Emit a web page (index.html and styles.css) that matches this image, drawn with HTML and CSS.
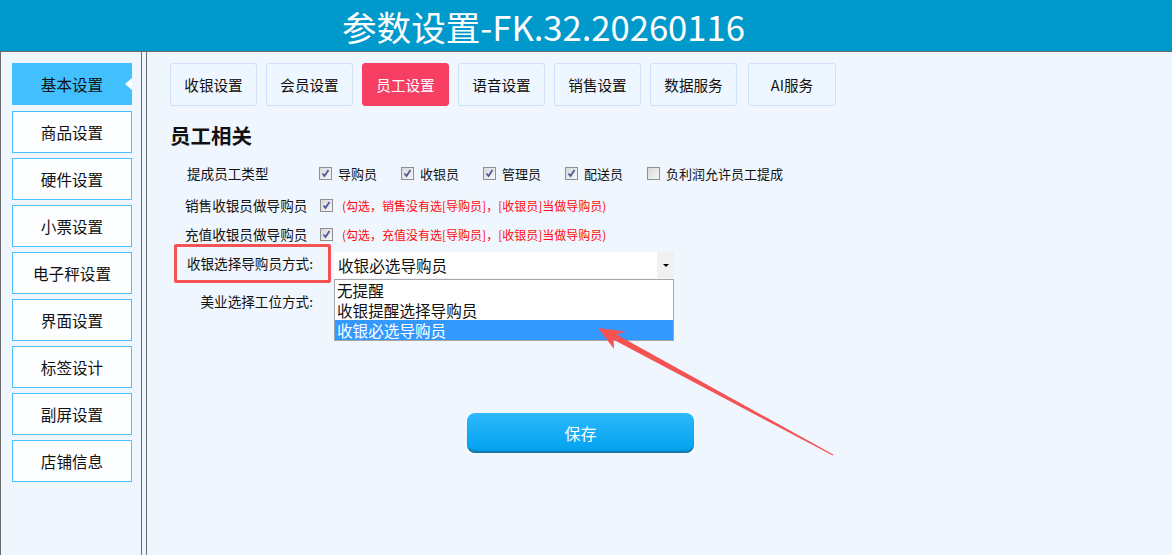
FILE: index.html
```html
<!DOCTYPE html>
<html lang="zh-CN">
<head>
<meta charset="UTF-8">
<meta name="viewport" content="width=device-width, initial-scale=1.0">
<title>参数设置</title>
<link rel="stylesheet" href="styles.css">
</head>
<body>

<div class="header">参数设置-FK.32.20260116</div>

<div class="content">
    <div class="sidebar">
        <div class="nav active">基本设置</div>
        <div class="nav">商品设置</div>
        <div class="nav">硬件设置</div>
        <div class="nav">小票设置</div>
        <div class="nav">电子秤设置</div>
        <div class="nav">界面设置</div>
        <div class="nav">标签设计</div>
        <div class="nav">副屏设置</div>
        <div class="nav">店铺信息</div>
    </div>

    <div class="main">
        <div class="tabs">
            <div class="tab">收银设置</div>
            <div class="tab">会员设置</div>
            <div class="tab active">员工设置</div>
            <div class="tab">语音设置</div>
            <div class="tab">销售设置</div>
            <div class="tab">数据服务</div>
            <div class="tab wide">AI服务</div>
        </div>

        <h2 class="section-title">员工相关</h2>

        <div class="form">
            <div class="row row1">
                <span class="label">提成员工类型</span>
                <label class="check"><span class="box checked"></span>导购员</label>
                <label class="check"><span class="box checked"></span>收银员</label>
                <label class="check"><span class="box checked"></span>管理员</label>
                <label class="check"><span class="box checked"></span>配送员</label>
                <label class="check last"><span class="box"></span>负利润允许员工提成</label>
            </div>
            <div class="row row2">
                <span class="label">销售收银员做导购员</span>
                <span class="box checked"></span>
                <span class="note">(勾选，销售没有选[导购员]，[收银员]当做导购员)</span>
            </div>
            <div class="row row3">
                <span class="label">充值收银员做导购员</span>
                <span class="box checked"></span>
                <span class="note">(勾选，充值没有选[导购员]，[收银员]当做导购员)</span>
            </div>
            <div class="row row4">
                <span class="label marked">收银选择导购员方式:</span>
                <div class="select">
                    <span class="select-text">收银必选导购员</span>
                    <span class="select-btn"></span>
                    <ul class="options">
                        <li>无提醒</li>
                        <li>收银提醒选择导购员</li>
                        <li class="selected">收银必选导购员</li>
                    </ul>
                </div>
            </div>
            <div class="row row5">
                <span class="label right">美业选择工位方式:</span>
            </div>
        </div>

        <div class="save-wrap"><button class="save">保存</button></div>
    </div>
</div>

<svg class="arrow" width="1172" height="555" viewBox="0 0 1172 555">
    <polygon fill="#f55353" points="598,328 626,331.5 616.5,334.5 833.3,454.6 832.8,455.5 613.5,339.8 614,349"/>
</svg>

</body>
</html>
```

FILE: styles.css
```css
body {
    margin: 0;
    position: relative;
    height: 555px;
    overflow: hidden;
    background-color: #eff6fe;
    font-family: "Noto Sans CJK SC", "Noto Sans", sans-serif;
    color: #111;
}
.header {
    height: 51px;
    line-height: 53px;
    background-color: #0099cb;
    color: #fff;
    font-size: 34.6px;
    padding-left: 342px;
    border-bottom: 1px solid #6b6b6b;
    white-space: nowrap;
}
.content {
    display: flex;
    height: 503px;
}
.sidebar {
    box-sizing: border-box;
    width: 142px;
    border-left: 1px solid #6b6b6b;
    border-right: 1px solid #6b6b6b;
    padding: 11px 0 0 11px;
}
.nav {
    box-sizing: border-box;
    width: 120px;
    height: 42px;
    line-height: 40px;
    margin-bottom: 5px;
    border: 1px solid #49c2fb;
    background-color: #fdfeff;
    text-align: center;
    font-size: 15.6px;
}
.nav.active {
    position: relative;
    border-color: #41bffe;
    background-color: #41bffe;
    margin-bottom: 6px;
}
.nav.active::after {
    content: "";
    position: absolute;
    right: -1px;
    top: 14px;
    border-top: 6px solid transparent;
    border-bottom: 6px solid transparent;
    border-right: 7px solid #fff;
}
.main {
    flex: 1;
    margin-left: 4px;
    border-left: 1px solid #6b6b6b;
}
.tabs {
    display: flex;
    gap: 9px;
    margin: 11px 0 0 23px;
}
.tab {
    box-sizing: border-box;
    width: 87px;
    height: 43px;
    line-height: 41px;
    text-align: center;
    font-size: 14.6px;
    background-color: #eef6ff;
    border: 1px solid #cfe0f6;
    border-radius: 3px;
}
.tab.active {
    background-color: #f73e63;
    border-color: #f73e63;
    color: #fff;
}
.tab.wide {
    width: 88px;
    margin-left: 2px;
}
.section-title {
    margin: 18px 0 0 23px;
    height: 22px;
    line-height: 22px;
    font-size: 20.5px;
    font-weight: bold;
}
.form {
    margin: 16px 0 0 27px;
    font-size: 13.6px;
}
.row {
    display: flex;
    align-items: center;
    height: 22px;
    white-space: nowrap;
}
.row2 {
    margin-top: 10px;
}
.row3 {
    margin-top: 7px;
}
.row4 {
    margin-top: -1px;
    height: 39px;
}
.row5 {
    margin-top: 7px;
}
.label {
    box-sizing: border-box;
    width: 146px;
    padding-left: 11px;
}
.row1 .label {
    width: 145px;
    padding-left: 13px;
}
.label.marked,
.label.right {
    width: 157px;
    text-align: right;
    padding-left: 0;
    padding-right: 18px;
}
.label.marked {
    height: 39px;
    line-height: 33px;
    border: 3px solid #f35353;
    border-radius: 2px;
    padding-right: 15px;
}
.check {
    display: flex;
    align-items: center;
    width: 82px;
    font-size: 13px;
}
.check.last {
    width: auto;
}
.box {
    box-sizing: border-box;
    width: 13px;
    height: 13px;
    margin-right: 6px;
    border: 1px solid #8e8f8f;
    background: linear-gradient(135deg, #d9d9d9, #f7f7f7);
    flex-shrink: 0;
}
.box.checked {
    background:
        url("data:image/svg+xml;utf8,<svg xmlns='http://www.w3.org/2000/svg' width='11' height='11'><path d='M2.5 5.5 L4.5 8 L8.5 2' fill='none' stroke='%234a5c9c' stroke-width='1.8'/></svg>") no-repeat center,
        linear-gradient(135deg, #d9d9d9, #f7f7f7);
}
.row2 .box,
.row3 .box {
    margin-right: 9px;
}
.note {
    color: #ff0a0a;
    font-size: 12px;
}
.select {
    position: relative;
    box-sizing: border-box;
    width: 340px;
    height: 26px;
    margin: 3px 0 0 3px;
    background-color: #fff;
    display: flex;
    align-items: center;
}
.select-text {
    flex: 1;
    padding-left: 4px;
    font-size: 15.6px;
}
.select-btn {
    position: relative;
    width: 17px;
    height: 26px;
    background-color: #f0f0f0;
}
.select-btn::after {
    content: "";
    position: absolute;
    left: 6px;
    top: 12px;
    border-left: 3px solid transparent;
    border-right: 3px solid transparent;
    border-top: 3px solid #000;
}
.options {
    position: absolute;
    left: 0;
    top: 27px;
    box-sizing: border-box;
    width: 340px;
    margin: 0;
    padding: 0;
    list-style: none;
    background-color: #fff;
    border: 1px solid #a7a7a7;
    font-size: 15.6px;
}
.options li {
    height: 20px;
    line-height: 20px;
    padding-left: 2px;
}
.options li.selected {
    background-color: #3399ff;
    color: #fff;
}
.save-wrap {
    width: 227px;
    height: 40px;
    margin: 101px 0 0 320px;
    background-color: #fff;
}
.save {
    display: block;
    width: 227px;
    height: 40px;
    border: none;
    border-radius: 8px;
    background: linear-gradient(#2db9fd, #00a1ef);
    box-shadow: inset 0 -3px 2px -1px rgba(60, 60, 60, 0.45);
    color: #fff;
    font-family: inherit;
    font-size: 16px;
    cursor: pointer;
}
.arrow {
    position: absolute;
    left: 0;
    top: 0;
    pointer-events: none;
}
```
